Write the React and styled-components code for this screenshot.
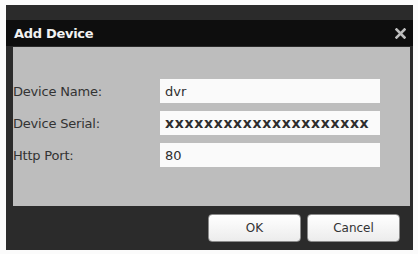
import React from "react"
import styled, { createGlobalStyle } from "styled-components"

const Global = createGlobalStyle`
  html, body {
    margin: 0;
    padding: 0;
    background: #fbfbfb;
    font-family: "DejaVu Sans", Verdana, sans-serif;
  }
`

const fields = [
  { label: "Device Name:", value: "dvr" },
  { label: "Device Serial:", value: "xxxxxxxxxxxxxxxxxxxxx", wide: true },
  { label: "Http Port:", value: "80" },
]

const App = () => (
  <>
    <Global />
    <Dialog>
      <TitleBar>
        <Title>Add Device</Title>
        <Close aria-label="Close">
          <svg width="11" height="11" viewBox="0 0 11 11">
            <path d="M1.5 1.5 L9.5 9.5 M9.5 1.5 L1.5 9.5" stroke="#bdbdbd" strokeWidth="2.6" strokeLinecap="square" />
          </svg>
        </Close>
      </TitleBar>
      <Body>
        {fields.map(f => (
          <Row key={f.label}>
            <Label>{f.label}</Label>
            <Input readOnly value={f.value} $wide={f.wide} />
          </Row>
        ))}
      </Body>
      <Footer>
        <Button>OK</Button>
        <Button>Cancel</Button>
      </Footer>
    </Dialog>
  </>
)

const Dialog = styled.div`
  margin: 5px 0 0 6px;
  width: 407px;
  height: 245px;
  background: #2b2b2b;
  padding-top: 15px;
  box-sizing: border-box;
  display: flex;
  flex-direction: column;
`

const TitleBar = styled.div`
  height: 26px;
  background: #0e0e0e;
  display: flex;
  align-items: center;
  justify-content: space-between;
  padding: 0 7px 0 8px;
`

const Title = styled.span`
  color: #f2f2f2;
  font-size: 13px;
  font-weight: bold;
  letter-spacing: -0.3px;
`

const Close = styled.span`
  display: flex;
  align-items: center;
`

const Body = styled.div`
  margin: 1px 3px 0 7px;
  height: 159px;
  background: #bdbdbd;
  padding: 32px 0 0 0;
  box-sizing: border-box;
  display: flex;
  flex-direction: column;
  gap: 8px;
`

const Row = styled.div`
  display: flex;
  align-items: center;
`

const Label = styled.span`
  width: 147px;
  font-size: 13px;
  letter-spacing: -0.2px;
  color: #333;
`

const Input = styled.input`
  width: 220px;
  height: 24px;
  box-sizing: border-box;
  border: none;
  outline: none;
  background: #fafafa;
  padding: 0 5px;
  font-family: "DejaVu Sans", Verdana, sans-serif;
  font-size: ${p => (p.$wide ? "14px" : "13px")};
  font-weight: ${p => (p.$wide ? "bold" : "normal")};
  letter-spacing: ${p => (p.$wide ? "0.7px" : "0")};
  color: #2e2e2e;
`

const Footer = styled.div`
  flex: 1;
  display: flex;
  justify-content: flex-end;
  align-items: flex-start;
  gap: 6px;
  padding: 8px 13px 0 0;
`

const Button = styled.button`
  width: 93px;
  height: 28px;
  border: 1px solid #8a8a8a;
  border-radius: 4px;
  background: linear-gradient(#ffffff, #ececec);
  font-family: "DejaVu Sans", Verdana, sans-serif;
  font-size: 12px;
  color: #333;
  padding: 0;
`

export default App
